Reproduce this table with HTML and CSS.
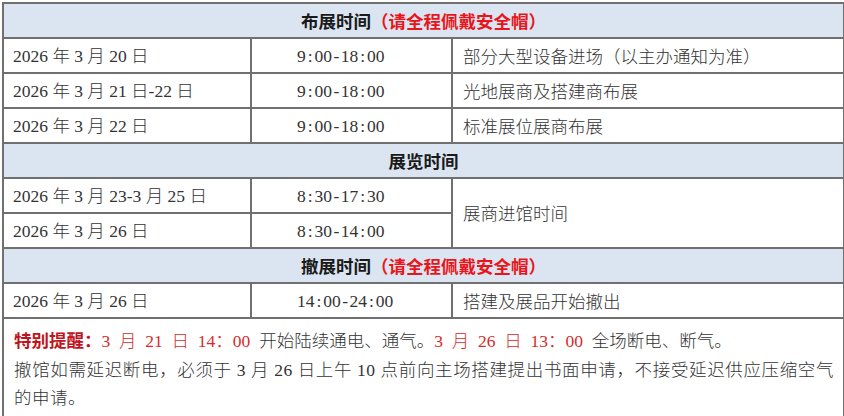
FILE: index.html
```html
<!DOCTYPE html>
<html lang="zh-CN">
<head>
<meta charset="utf-8">
<link rel="stylesheet" href="styles.css">
</head>
<body>
<table class="schedule">
  <colgroup>
    <col class="c-date">
    <col class="c-time">
    <col class="c-desc">
  </colgroup>
  <tr class="head">
    <td colspan="3">布展时间<span class="warn">（请全程佩戴安全帽）</span></td>
  </tr>
  <tr>
    <td class="date">2026 年 3 月 20 日</td>
    <td class="time">9<span class="p">:</span>00<span class="p">-</span>18<span class="p">:</span>00</td>
    <td class="desc">部分大型设备进场（以主办通知为准）</td>
  </tr>
  <tr>
    <td class="date">2026 年 3 月 21 日-22 日</td>
    <td class="time">9<span class="p">:</span>00<span class="p">-</span>18<span class="p">:</span>00</td>
    <td class="desc">光地展商及搭建商布展</td>
  </tr>
  <tr>
    <td class="date">2026 年 3 月 22 日</td>
    <td class="time">9<span class="p">:</span>00<span class="p">-</span>18<span class="p">:</span>00</td>
    <td class="desc">标准展位展商布展</td>
  </tr>
  <tr class="head">
    <td colspan="3">展览时间</td>
  </tr>
  <tr>
    <td class="date">2026 年 3 月 23-3 月 25 日</td>
    <td class="time">8<span class="p">:</span>30<span class="p">-</span>17<span class="p">:</span>30</td>
    <td class="desc" rowspan="2">展商进馆时间</td>
  </tr>
  <tr>
    <td class="date">2026 年 3 月 26 日</td>
    <td class="time">8<span class="p">:</span>30<span class="p">-</span>14<span class="p">:</span>00</td>
  </tr>
  <tr class="head">
    <td colspan="3">撤展时间<span class="warn">（请全程佩戴安全帽）</span></td>
  </tr>
  <tr>
    <td class="date">2026 年 3 月 26 日</td>
    <td class="time">14<span class="p">:</span>00<span class="p">-</span>24<span class="p">:</span>00</td>
    <td class="desc">搭建及展品开始撤出</td>
  </tr>
  <tr class="notes">
    <td colspan="3">
      <p class="note first"><strong class="label">特别提醒：</strong><span class="hl">3 月 21 日 14：00</span> 开始陆续通电、通气。<span class="hl">3 月 26 日 13：00</span> 全场断电、断气。</p>
      <p class="note just">撤馆如需延迟断电，必须于 3 月 26 日上午 10 点前向主场搭建提出书面申请，不接受延迟供应压缩空气的申请。</p>
    </td>
  </tr>
</table>
</body>
</html>
```

FILE: styles.css
```css
html, body {
  margin: 0;
  padding: 0;
  background: #ffffff;
}

body {
  padding: 2px 0 0 2px;
  font-family: "Liberation Serif", "Noto Sans CJK SC", serif;
  font-size: 17.5px;
  font-weight: 300;
  color: #333333;
}

.schedule {
  border-collapse: collapse;
  table-layout: fixed;
  width: 841px;
}

.c-date { width: 248px; }
.c-time { width: 201px; }
.c-desc { width: 392px; }

.schedule td {
  border: 2px solid #707070;
  height: 33px;
  padding: 0;
  vertical-align: middle;
  white-space: nowrap;
  line-height: 20px;
}

.head td {
  background: #dbe5f1;
  text-align: center;
  font-family: "Noto Sans CJK SC", sans-serif;
  font-weight: 700;
  color: #1a1a1a;
}

.warn {
  color: #e8161b;
}

.date {
  padding-left: 9px !important;
}

.time {
  padding-left: 45px !important;
}

.time .p {
  display: inline-block;
  width: 8.75px;
  text-align: center;
}

.desc {
  padding-left: 10px !important;
  font-family: "Noto Sans CJK SC", sans-serif;
}

.notes td {
  height: auto;
  padding: 7px 9px 7px 10px;
  white-space: normal;
  vertical-align: top;
}

.note {
  margin: 0;
  line-height: 28.5px;
}

.first {
  word-spacing: 4.4px;
}

.just {
  text-align: justify;
  letter-spacing: 0.5px;
}

.label {
  font-family: "Noto Sans CJK SC", sans-serif;
  font-weight: 700;
  color: #c0141c;
  letter-spacing: 0;
}

.hl {
  color: #d82a2a;
}
```
